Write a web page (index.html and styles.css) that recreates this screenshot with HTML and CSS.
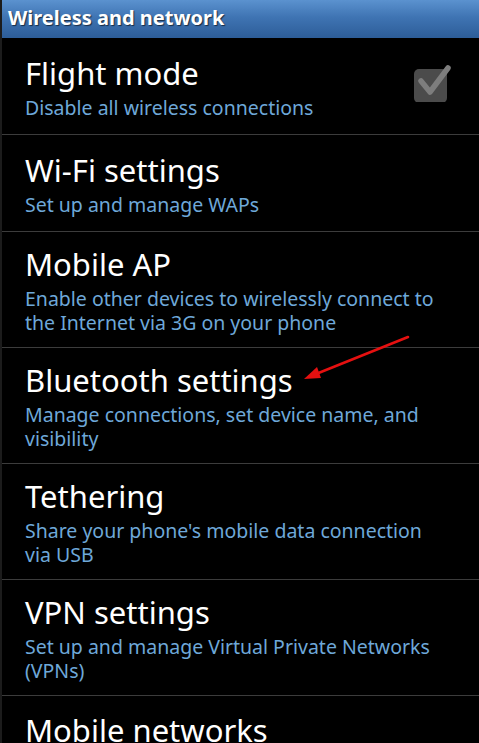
FILE: index.html
```html
<!DOCTYPE html>
<html>
<head>
<meta charset="utf-8">
<link rel="stylesheet" href="styles.css">
</head>
<body>
<div class="screen">
  <div class="header">Wireless and network</div>
  <div class="list">
    <div class="item with-check">
      <div class="text">
        <div class="title">Flight mode</div>
        <div class="sub">Disable all wireless connections</div>
      </div>
      <div class="check">
        <svg width="40" height="40" viewBox="0 0 40 40">
          <rect x="2" y="7" width="33" height="34" rx="5" fill="#4b4b4b"/>
          <path d="M9 19 L18 30 L36 6" fill="none" stroke="#7d7d7d" stroke-width="5.5" stroke-linecap="round" stroke-linejoin="round"/>
        </svg>
      </div>
    </div>
    <div class="item">
      <div class="text">
        <div class="title">Wi-Fi settings</div>
        <div class="sub">Set up and manage WAPs</div>
      </div>
    </div>
    <div class="item">
      <div class="text">
        <div class="title">Mobile AP</div>
        <div class="sub">Enable other devices to wirelessly connect to the Internet via 3G on your phone</div>
      </div>
    </div>
    <div class="item">
      <div class="text">
        <div class="title">Bluetooth settings</div>
        <div class="sub">Manage connections, set device name, and visibility</div>
      </div>
    </div>
    <div class="item">
      <div class="text">
        <div class="title">Tethering</div>
        <div class="sub">Share your phone's mobile data connection via USB</div>
      </div>
    </div>
    <div class="item">
      <div class="text">
        <div class="title">VPN settings</div>
        <div class="sub">Set up and manage Virtual Private Networks (VPNs)</div>
      </div>
    </div>
    <div class="item last">
      <div class="text">
        <div class="title">Mobile networks</div>
      </div>
    </div>
  </div>
  <svg class="arrow" width="479" height="743" viewBox="0 0 479 743">
    <line x1="408" y1="337" x2="316" y2="374" stroke="#e51010" stroke-width="2.6" stroke-linecap="round"/>
    <polygon points="304,379 317,367 321,378" fill="#e51010"/>
  </svg>
</div>
</body>
</html>
```

FILE: styles.css
```css
html, body {
  margin: 0;
  padding: 0;
  background: #000;
  height: 100%;
  overflow: hidden;
}
.screen {
  position: relative;
  width: 479px;
  height: 743px;
  box-sizing: border-box;
  border-left: 2px solid #1c1c1c;
  background: #000;
  font-family: "Noto Sans", "DejaVu Sans", sans-serif;
  overflow: hidden;
}
.header {
  height: 38px;
  box-sizing: border-box;
  padding: 5px 0 0 6px;
  background: linear-gradient(to bottom, #5b92cf 0%, #3f74b3 45%, #2d5d98 100%);
  color: #fff;
  font-weight: bold;
  font-size: 20px;
  line-height: 26px;
  text-shadow: 1px 1px 1px rgba(0,0,0,0.6);
}
.item {
  display: flex;
  align-items: center;
  box-sizing: border-box;
  min-height: 97px;
  padding: 12px 30px 12px 23px;
  border-bottom: 1px solid #3c3c3c;
}
.item.with-check {
  padding-right: 24px;
}
.item.last {
  align-items: flex-start;
  padding-top: 14px;
}
.text {
  flex: 1;
  display: flex;
  flex-direction: column;
}
.title {
  color: #fff;
  font-size: 31px;
  line-height: 40px;
}
.sub {
  color: #6ea8d9;
  font-size: 19.5px;
  line-height: 24px;
  margin-top: 3px;
}
.check {
  width: 40px;
  height: 40px;
  margin-right: 3px;
  margin-top: -8px;
}
.arrow {
  position: absolute;
  left: -2px;
  top: 0;
  pointer-events: none;
}
```
